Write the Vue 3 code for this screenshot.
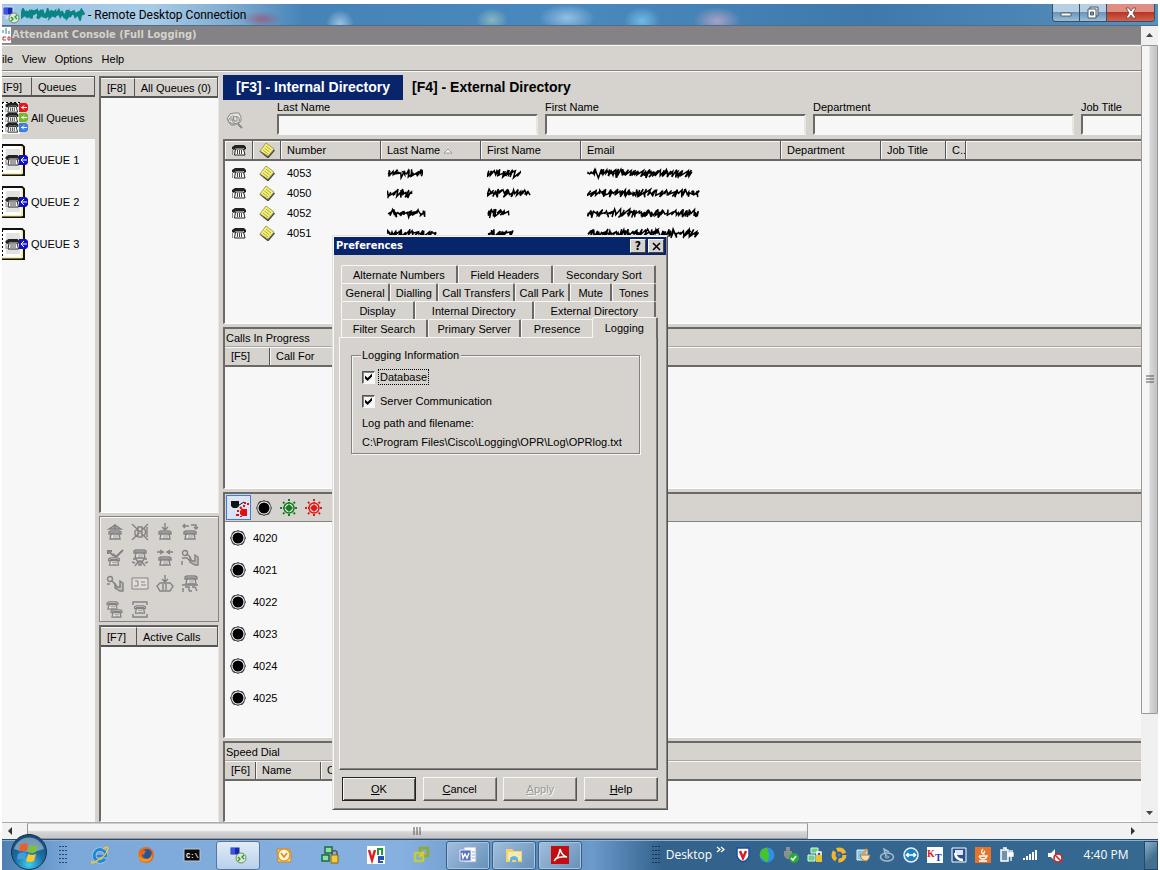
<script setup>
import { ref } from 'vue'

const menus = ['ile', 'View', 'Options', 'Help']
const queues = ['QUEUE 1', 'QUEUE 2', 'QUEUE 3']
const fields = [
  { id: 'last', label: 'Last Name' },
  { id: 'first', label: 'First Name' },
  { id: 'dept', label: 'Department' },
  { id: 'job', label: 'Job Title' },
]
const contacts = [
  { number: '4053', last: 36, first: 34, email: 108 },
  { number: '4050', last: 28, first: 45, email: 114 },
  { number: '4052', last: 40, first: 23, email: 112 },
  { number: '4051', last: 52, first: 27, email: 112 },
]
const extensions = ['4020', '4021', '4022', '4023', '4024', '4025']
const tabRows = [
  [['Alternate Numbers', 117], ['Field Headers', 95], ['Secondary Sort', 103]],
  [['General', 49], ['Dialling', 48], ['Call Transfers', 78], ['Call Park', 55], ['Mute', 42], ['Tones', 43]],
  [['Display', 73], ['Internal Directory', 119], ['External Directory', 123]],
  [['Filter Search', 86], ['Primary Server', 93], ['Presence', 71], ['Logging', 65]],
]
const activeTab = ref('Logging')
const database = ref(true)
const server = ref(true)
const callActions = ['answer', 'mute', 'hold', 'swap', 'accept', 'conference', 'transfer', 'retrieve', 'release', 'card', 'park', 'group', 'multi', 'page']
const pinned = ['ie', 'firefox', 'cmd', 'rdp', 'outlook', 'putty', 'vnc', 'vmware', 'word', 'folder', 'pdf']
const tray = ['shield', 'globe', 'usb', 'lock', 'swirl', 'paint', 'disc', 'viewer', 'kt', 'callbox', 'java', 'plug', 'signal', 'mute-vol']

function scribble(width, seed) {
  let s = seed * 97 + 13
  const rnd = () => {
    s = (s * 1103515245 + 12345) % 2147483648
    return s / 2147483648
  }
  let d = 'M1 7'
  for (let x = 2; x < width - 1; x += 2) {
    d += ` L${(x + rnd() * 5 - 2).toFixed(1)} ${(2 + rnd() * 4).toFixed(1)} L${(x + rnd() * 5 - 3).toFixed(1)} ${(6 + rnd() * 5).toFixed(1)}`
  }
  return d
}
</script>

<template>
  <div class="screen">
    <svg class="defs" aria-hidden="true">
      <symbol id="phone" viewBox="0 0 16 14">
        <path d="M4.500 6h8l1.500 6H3.500z" fill="#fff" stroke="#222" />
        <path d="M1 6V4l3-2h9l2 2v2l-2 1V5H5l-2 2z" fill="#222" />
        <path d="M6.500 7v4M8.500 7v4M10.500 7v4" fill="none" stroke="#444" />
        <path d="M1.500 7v5" fill="none" stroke="#888" />
      </symbol>
      <symbol id="note" viewBox="0 0 16 16">
        <path d="m1 9 8 6.500L15.500 8" fill="none" stroke="#444" stroke-width="1.500" />
        <path d="M7 1 15 7 9 14 1 9z" fill="#f6f27c" stroke="#8d8a3c" stroke-width=".8" />
        <path d="m7 4 5 4M5.500 6l5 4M4 8l5 4" stroke="#aaa640" />
      </symbol>
      <symbol id="gphone" viewBox="0 0 14 10">
        <path d="M1 4V2l2-1h8l2 1v2h-2V3H3v1z" fill="#ddd" stroke="#848284" />
        <path d="m3 4-1 5h10l-1-5z" fill="#e4e2de" stroke="#848284" />
        <path d="M5 6h5M5 8h5" stroke="#848284" stroke-width=".7" />
      </symbol>
      <symbol id="dot" viewBox="0 0 16 16">
        <path d="m8 0 2 1h2l2 2 1 3 1 2-1 2-1 3-2 2h-2l-2 1-2-1H4l-2-2-1-3-1-2 1-2 1-3 2-2h2z" fill="#444" />
        <circle cx="8" cy="8" r="6.5" fill="#fff" />
        <circle cx="8" cy="8" r="5.5" fill="#000" />
      </symbol>
      <symbol id="rdp" viewBox="0 0 18 18">
        <path d="M1 1h10v8H1z" fill="#1628ac" stroke="#dfe6f2" />
        <path d="M2 2h4v6H2z" fill="#3b55e0" />
        <path d="M4 10h4v3H3z" fill="#d9dde2" />
        <circle cx="12" cy="12" r="5" fill="#d9ead2" stroke="#6d8c67" />
        <path d="m9 11 2 2-2 2m6-6-2 2 2 2" fill="none" stroke="#24922a" stroke-width="1.3" />
      </symbol>
    </svg>

    <header class="rdp-bar">
      <svg class="i18" viewBox="0 0 18 18"><use href="#rdp" /></svg>
      <svg class="host" width="64" height="13" viewBox="0 0 64 13" role="img" aria-label="Hidden host name">
        <path :d="scribble(64, 5)" fill="none" stroke="#0b8484" stroke-width="3" />
      </svg>
      <span>- Remote Desktop Connection</span>
      <div class="caption">
        <button aria-label="Minimize"><svg width="14" height="12"><path d="M2 6h10v3H2z" fill="#fff" stroke="#53606c" /></svg></button>
        <button aria-label="Restore"><svg width="14" height="14"><path d="M4 1h8v9H4z" fill="#dfe8f0" stroke="#4b5a68" /><path d="M2 3h8v9H2z" fill="#fff" stroke="#4b5a68" /><path d="M4.500 6h3v3h-3z" fill="#7894ad" stroke="#4b5a68" /></svg></button>
        <button class="close" aria-label="Close"><svg width="14" height="12"><path d="M2 1h3l2 3 2-3h3L9 6l3 5H9L7 8l-2 3H2l3-5z" fill="#fff" stroke="#6b3f3c" stroke-width=".8" /></svg></button>
      </div>
    </header>

    <div class="remote">
      <main class="console">
        <h1><svg width="9" height="16" viewBox="0 0 9 16"><path d="M0 0h9v16H0z" fill="#fff" /><path d="M1 3v3M4 1v6M7 4v3" stroke="#2a8394" /><path d="M4 10H1v3h3M6 10h2v3H6z" fill="none" stroke="#b33" /></svg>Attendant Console (Full Logging)</h1>
        <nav><a v-for="m in menus" :key="m" href="#">{{ m }}</a></nav>
        <div class="columns">
          <section class="queues">
            <div class="head"><span class="f9">[F9]</span><span class="grow">Queues</span></div>
            <ul>
              <li class="on">
                <svg width="27" height="32" viewBox="0 0 27 32">
                  <path d="M0 0h18v32H0z" fill="#fff" /><path d="M.5 0v32M0 .5h18" stroke="#000" stroke-dasharray="2 2" />
                  <path d="M17 1h7l2 2v5l-2 2h-7z" fill="#e01820" /><path d="M17 11h7l2 2v5l-2 2h-7z" fill="#76b82a" /><path d="M17 21h7l2 2v5l-2 2h-7z" fill="#3d7de0" />
                  <path d="M25 5.500h-6m3-2-2 2 2 2M25 15.500h-6m3-2-2 2 2 2M25 25.500h-6m3-2-2 2 2 2" fill="none" stroke="#fff" />
                  <use href="#phone" x="2" y="-1" width="16" height="13" /><use href="#phone" x="2" y="9" width="16" height="13" /><use href="#phone" x="2" y="19" width="16" height="13" />
                </svg>All Queues
              </li>
              <li v-for="q in queues" :key="q">
                <svg width="27" height="32" viewBox="0 0 27 32">
                  <path d="M0 1h20l2 2v28H0z" fill="#fff" /><path d="M0 1h20l2 2v28H0" fill="none" stroke="#111" stroke-width="2" /><path d="M20 2v28H0" fill="none" stroke="#e8dc6a" />
                  <path d="M4 5h14v21H4z" fill="#e2e2e2" /><path d="M.5 2v28" stroke="#000" stroke-dasharray="2 2" />
                  <path d="M17 11h7l2 2v6l-2 2h-7z" fill="#1212c8" /><path d="M25 16h-6m3-3-3 3 3 3" fill="none" stroke="#fff" />
                  <use href="#phone" x="2" y="9" width="17" height="14" />
                </svg>{{ q }}
              </li>
            </ul>
          </section>

          <section class="middle">
            <div class="sunk"><div class="head"><span class="f8">[F8]</span><span class="grow">All Queues (0)</span></div></div>
            <div class="actions">
              <button v-for="a in callActions" :key="a" disabled :aria-label="a">
                <svg width="18" height="18" viewBox="0 0 18 18" fill="none" stroke="#848284" stroke-width="1.4">
                  <template v-if="a === 'answer'"><path d="M9 1v6M3 6l6-4 6 4z" fill="#aaa" /><use href="#gphone" x="2" y="7" width="14" height="10" /></template>
                  <template v-if="a === 'mute'"><path d="m1 1 16 16M17 1 1 17M7 6 4 8v4l3 2V4l4 0v10H8M13 5q3 4 0 8M16 4v10" /></template>
                  <template v-if="a === 'hold'"><path d="M9 0v6M6 4l3 3 3-3" /><use href="#gphone" x="2" y="7" width="14" height="10" /></template>
                  <template v-if="a === 'swap'"><path d="M8 3H2m2-2L2 3l2 2M10 2h5v4m-2-2 2 2 2-2" /><use href="#gphone" x="2" y="7" width="14" height="10" /></template>
                  <template v-if="a === 'accept'"><path d="m2 2 6 5M2 5V2h4M7 5l3 3 7-7" stroke-width="2" /><use href="#gphone" x="1" y="8" width="14" height="9" /></template>
                  <template v-if="a === 'conference'"><use href="#gphone" x="2" y="0" width="14" height="10" /><path d="M2 10h3l2 3-3 4M16 10h-3l-2 3 3 4M1 13l3 1M17 13l-3 1M8 12h2v4H8z" /></template>
                  <template v-if="a === 'transfer'"><path d="M1 3h7M4 1l3 2-3 2M17 3h-6m3-2-3 2 3 2" /><use href="#gphone" x="2" y="7" width="14" height="10" /></template>
                  <template v-if="a === 'retrieve'"><circle cx="4" cy="4" r="2.5" /><path d="m6 5 4 4M1 9h5l3 3M1 12v4" /><path d="m9 9 2 3h3V6l3 2v8h-3l-5-3z" fill="#bbb" /></template>
                  <template v-if="a === 'release'"><circle cx="4" cy="4" r="2.5" /><path d="m6 6 4 4M1 9h3" /><path d="m9 9 2 3h3V6l3 2v8h-3l-5-3z" fill="#bbb" /></template>
                  <template v-if="a === 'card'"><path d="M1 3h16v11H1zM4 6h3v5H3M10 7h4M10 10h5" fill="#e2dfda" stroke-width="1" /></template>
                  <template v-if="a === 'park'"><path d="M9 0v6M6 4l3 3 3-3M4 8h10l3 3-3 5H4l-3-5zM7 9v6M10 9v6" /></template>
                  <template v-if="a === 'group'"><use href="#gphone" x="3" y="0" width="14" height="10" /><path d="M1 10h16M4 12h4v4M11 12h3l2 4M2 13v4M8 16h3" /></template>
                  <template v-if="a === 'multi'"><use href="#gphone" x="0" y="0" width="13" height="9" /><use href="#gphone" x="4" y="8" width="13" height="9" /></template>
                  <template v-if="a === 'page'"><path d="M2 4V1h14v3M2 13v3h14v-3" /><use href="#gphone" x="2" y="4" width="14" height="9" /></template>
                </svg>
              </button>
            </div>
            <div class="sunk"><div class="head"><span class="f8">[F7]</span><span class="grow">Active Calls</span></div></div>
          </section>

          <section class="right">
            <div class="search">
              <div class="dirtabs"><button class="on">[F3] - Internal Directory</button><button>[F4] - External Directory</button></div>
              <div class="fields">
                <svg class="find" width="18" height="18" viewBox="0 0 18 18" fill="none" stroke="#8b8985"><path d="M3 10 1 7l3-5 4-1h5l2 4v4l-3 3H7z" fill="#e6e4e0" /><path d="M5 4v5M7 3l1 6h3V5M4 6l-2 3 3 4h4" /><path d="m12 12 4 4" stroke-width="2" /><circle cx="10" cy="8" r="3.500" /></svg>
                <label v-for="f in fields" :key="f.id" :for="f.id">{{ f.label }}<input :id="f.id" type="text" /></label>
              </div>
            </div>
            <div class="sunk directory">
              <table>
                <colgroup><col class="c28" /><col class="c28" /><col class="c100" /><col class="c100" /><col class="c100" /><col class="c200" /><col class="c100" /><col class="c65" /><col class="c20" /><col /></colgroup>
                <thead><tr>
                  <th class="ic"><svg width="16" height="14"><use href="#phone" /></svg></th><th class="ic"><svg width="16" height="16"><use href="#note" /></svg></th>
                  <th>Number</th><th>Last Name <svg width="10" height="6"><path d="M1 5 5 1l4 4z" fill="#fff" stroke="#999" /></svg></th><th>First Name</th><th>Email</th><th>Department</th><th>Job Title</th><th>C..</th><th></th>
                </tr></thead>
                <tbody><tr v-for="(c, i) in contacts" :key="c.number">
                  <td class="ic"><svg width="16" height="14"><use href="#phone" /></svg></td><td class="ic"><svg width="16" height="16"><use href="#note" /></svg></td>
                  <td>{{ c.number }}</td>
                  <td v-for="(w, k) in [c.last, c.first, c.email]" :key="k"><svg :width="w" height="13" role="img" aria-label="Hidden"><path :d="scribble(w, i * 3 + k + 1)" fill="none" stroke="#000" stroke-width="1.500" /></svg></td>
                  <td></td><td></td><td></td><td></td>
                </tr></tbody>
              </table>
            </div>
            <div class="sunk">
              <h2>Calls In Progress</h2>
              <div class="strip"><span class="w44">[F5]</span><span class="grow">Call For</span></div>
            </div>
            <div class="sunk">
              <div class="blf">
                <button class="on" aria-label="All states"><svg width="20" height="20" viewBox="0 0 20 20"><path d="M2 3h8v5l-2 2H4L2 8z" fill="#111" /><path d="m7 9 8-5" stroke="#111" /><path d="M13 11h5v7h-5l-2-2v-3z" fill="#e01010" /><path d="M14 8h2M11 9l2 2M18 6h2M8 13h2M7 17h3M12 19v-1M15 5h2" stroke="#e01010" stroke-width="2" /></svg></button>
                <button aria-label="Idle"><svg width="16" height="16"><use href="#dot" /></svg></button>
                <button v-for="k in ['green', 'red']" :key="k" :class="k" :aria-label="k">
                  <svg width="18" height="18" viewBox="0 0 18 18" fill="none" stroke="currentColor" stroke-width="2"><path d="M9 0v18M0 9h18M3 3l12 12M15 3 3 15" stroke-dasharray="2 1" /><circle cx="9" cy="9" r="5" fill="#eee" stroke-width="1.500" /><circle cx="9" cy="9" r="2" fill="currentColor" /><path d="M9 5v8M5 9h8" stroke-width="1" /></svg>
                </button>
              </div>
              <ul class="exts"><li v-for="e in extensions" :key="e"><svg width="16" height="16"><use href="#dot" /></svg>{{ e }}</li></ul>
            </div>
            <div class="sunk">
              <h2>Speed Dial</h2>
              <div class="strip"><span class="w30">[F6]</span><span class="w65">Name</span><span class="grow">Contact</span></div>
            </div>
          </section>
        </div>
      </main>

      <div class="vscroll">
        <svg width="17" height="19"><path d="m5 11 3.500-4 3.500 4z" fill="#444" /></svg>
        <div class="thumb"><svg width="8" height="9"><path d="M0 1h8M0 4h8M0 7h8" stroke="#555" /></svg></div>
        <div class="rest"></div>
        <svg width="17" height="17"><path d="m5 6 3.500 4L12 6z" fill="#444" /></svg>
      </div>
    </div>

    <div class="hscroll">
      <svg width="25" height="16"><path d="m10 4-4 4 4 4z" fill="#333" /></svg>
      <div class="thumb"><svg width="9" height="8"><path d="M1 0v8M4 0v8M7 0v8" stroke="#555" /></svg></div>
      <div class="rest"></div>
      <svg width="35" height="16"><path d="m8 4 4 4-4 4z" fill="#333" /></svg>
    </div>

    <footer class="taskbar">
      <button class="start" aria-label="Start">
        <svg width="38" height="38" viewBox="0 0 38 38">
          <defs><radialGradient id="orb" cx=".5" cy=".85" r=".8"><stop offset="0" stop-color="#3fd0f0" /><stop offset=".5" stop-color="#1d6fa5" /><stop offset="1" stop-color="#174a78" /></radialGradient></defs>
          <circle cx="19" cy="19" r="17.500" fill="url(#orb)" stroke="#13334f" /><path d="M4 16a15.500 15.500 0 0 1 30 0q-15 6-30 0" fill="#fff" opacity=".4" />
          <path d="M10 12q4-3 8-1l-1 7q-5-1-8 1z" fill="#e8602a" /><path d="M20 12q4 2 8 0l-2 7q-4 2-8 0z" fill="#83bf35" /><path d="M8 21q4-3 8-1l-1 7q-4-2-8 0z" fill="#3f9de0" /><path d="M18 21q4 2 8 0l-2 7q-4 2-8 0z" fill="#fbc92d" />
        </svg>
      </button>
      <svg class="grip" width="9" height="19"><path d="M1 0v19M4 0v19M7 0v19" stroke="#24486e" stroke-dasharray="1 3" stroke-width="2" /></svg>
      <div class="pins">
        <button v-for="p in pinned" :key="p" :class="p" :aria-label="p">
          <svg width="18" height="18" viewBox="0 0 18 18">
            <template v-if="p === 'ie'"><path d="M14 13a6 6 0 1 1 .8-5.500V10H6" fill="none" stroke="#fff" stroke-width="4" opacity=".5" /><path d="M14 13a6 6 0 1 1 .8-5.500V10H6" fill="none" stroke="#1d86d8" stroke-width="3" /><path d="M1 15Q-1 18 4 16 16 10 17 2 16 0 12 3" fill="none" stroke="#f4c52c" stroke-width="1.500" /></template>
            <template v-if="p === 'firefox'"><circle cx="9" cy="9" r="8" fill="#e66a1b" /><circle cx="10" cy="8" r="5" fill="#24569a" /><path d="M1 5q1 9 8 8 5 0 6-6 1 8-6 9-7 0-8-8z" fill="#f29a1f" /><path d="m4 3 3 2 2-1-2 5-4-2z" fill="#e66a1b" /></template>
            <template v-if="p === 'cmd'"><path d="M1 3h16v12H1z" fill="#0b0b0b" stroke="#c0c8d0" /><text x="3" y="12" class="t7">C:\</text></template>
            <use v-if="p === 'rdp'" href="#rdp" />
            <template v-if="p === 'outlook'"><path d="M2 3h12l2 4v9H3z" fill="#f8d17a" stroke="#c08a28" /><circle cx="9" cy="9" r="6" fill="#fff4d8" stroke="#e59b2a" stroke-width="1.500" /><path d="m6 7 3 4 3-4" fill="none" stroke="#d58b1a" stroke-width="1.500" /></template>
            <template v-if="p === 'putty'"><path d="M4 1h7v6H4zM1 9h7v6H1z" fill="#8ee0a0" stroke="#1d6a4a" stroke-width="1.500" /><path d="M10 9h7v8h-7z" fill="#f0c838" stroke="#8a6a10" /><path d="M11 9V6q2.500-3 5 0v3" fill="none" stroke="#555" stroke-width="1.500" /></template>
            <template v-if="p === 'vnc'"><path d="M0 0h18v18H0z" fill="#fff" /><path d="m2 4 3 10L8 4" fill="none" stroke="#e02020" stroke-width="2.500" /><path d="M11 9V3h4v6" fill="none" stroke="#1b9a3a" stroke-width="2" /><path d="M16 16h-4v-5h4v2h-4" fill="none" stroke="#234fc0" stroke-width="2" /></template>
            <template v-if="p === 'vmware'"><path d="M7 2h8v8H7z" fill="none" stroke="#8cae1c" stroke-width="2.500" stroke-linejoin="round" /><path d="M2 7h8v8H2z" fill="none" stroke="#b5cf4a" stroke-width="2.500" stroke-linejoin="round" /><path d="m6 11 5-5" stroke="#f0c02c" stroke-width="2.500" /></template>
            <template v-if="p === 'word'"><path d="M5 1h12v15H5z" fill="#fff" stroke="#9aaace" /><path d="M1 4h11v11H1z" fill="#5b74c2" stroke="#e5ebf8" /><path d="m3 7 1 5 2-4 2 4 2-5" fill="none" stroke="#fff" stroke-width="1.400" /><path d="M13 6h3M13 9h3M13 12h3" stroke="#9aaace" /></template>
            <template v-if="p === 'folder'"><path d="M1 3h6l2 2h8v11H1z" fill="#f3d270" /><path d="M3 6h13v8H3z" fill="#fbeab0" /><path d="M5 17v-5q4-4 8 0v5h-2v-3H7v3z" fill="#5fb6e4" /></template>
            <template v-if="p === 'pdf'"><path d="M0 0h18v18H0z" fill="#c40d10" /><path d="M3 15q5-4 6-12 2 7 7 8-6-1-12 2" fill="none" stroke="#fff" stroke-width="1.600" /></template>
          </svg>
        </button>
      </div>
      <div class="tail">
        <svg class="grip" width="9" height="19"><path d="M1 0v19M4 0v19M7 0v19" stroke="#17344f" stroke-dasharray="1 3" stroke-width="2" /></svg>
        <a class="desktop" href="#">Desktop</a>
        <svg class="chev" width="9" height="8"><path d="m1 1 3 2.500L1 6m4-5 3 2.500L5 6" fill="none" stroke="#fff" stroke-width="1.300" /></svg>
        <div class="tray">
          <svg v-for="t in tray" :key="t" width="16" height="16" viewBox="0 0 16 16">
            <template v-if="t === 'shield'"><path d="M2 1h12v8q-1 4-6 6-5-2-6-6z" fill="#fff" stroke="#1f4e9a" stroke-width="1.500" /><path d="m5 4 3 7 3-7" fill="none" stroke="#d81f26" stroke-width="2.500" /></template>
            <template v-if="t === 'globe'"><circle cx="8" cy="8" r="7.500" fill="#2f8fe0" /><path d="M8 .5q-8 1-7 9l7 6q4-7 0-15" fill="#46c32d" /></template>
            <template v-if="t === 'usb'"><path d="M3 0h4v4h2v5L6 12H4L1 9V4h2z" fill="#8a8f92" /><circle cx="11" cy="11" r="5" fill="#2aa836" /><path d="m8 11 2 2 3-4" fill="none" stroke="#fff" stroke-width="1.600" /></template>
            <template v-if="t === 'lock'"><path d="M4 1h7v5H4zM1 8h7v6H1z" fill="#67d184" stroke="#e4f5e8" /><path d="M9 8h6v7H9z" fill="#e7c236" /><path d="M10 8V5h4v3" fill="none" stroke="#fff" stroke-width="1.500" /></template>
            <template v-if="t === 'swirl'"><circle cx="8" cy="8" r="5.500" fill="none" stroke="#f2b632" stroke-width="4" stroke-dasharray="9 2.500" /><circle cx="8" cy="8" r="1.500" fill="#5b7d94" /></template>
            <template v-if="t === 'paint'"><path d="M2 3h10v10H2z" fill="#7cc8ee" stroke="#e8f2f8" /><path d="M5 8h10q-1 6-5 6-4-1-5-6" fill="#f6dfb4" stroke="#b07a3a" /><path d="m7 8 5-6" stroke="#f0963c" stroke-width="2" /></template>
            <template v-if="t === 'disc'"><ellipse cx="8" cy="10" rx="6.500" ry="4" fill="none" stroke="#a8bccb" stroke-width="1.500" /><ellipse cx="8" cy="10" rx="2" ry="1" fill="none" stroke="#a8bccb" /><path d="M7 9 5 2l5 3" fill="none" stroke="#a8bccb" stroke-width="1.500" /></template>
            <template v-if="t === 'viewer'"><circle cx="8" cy="8" r="7" fill="#1e7fc2" stroke="#e6f3fb" stroke-width="1.500" /><path d="M3 8h10M5.500 6l-2 2 2 2m5-4 2 2-2 2" fill="none" stroke="#fff" stroke-width="1.600" /></template>
            <template v-if="t === 'kt'"><path d="M0 0h16v16H0z" fill="#fff" /><text x="0" y="10" class="k">K</text><text x="8" y="14" class="k blue">T</text></template>
            <template v-if="t === 'callbox'"><path d="M1 1h14v14H1z" fill="#2a4f93" stroke="#fff" /><path d="M4 3h8v5H4z" fill="#dfe8f6" /><path d="M4 6q1 7 8 7" fill="none" stroke="#fff" stroke-width="2.500" /></template>
            <template v-if="t === 'java'"><path d="M0 0h16v16H0z" fill="#e8742c" /><path d="M8 2Q5 5 8 7M10 4Q8 6 9 8M4 9h8q-1 3-4 3t-4-3M4 14h8" fill="none" stroke="#fff" stroke-width="1.300" /></template>
            <template v-if="t === 'plug'"><path d="M2 3h7v11H2zM4 1h3v2" fill="#6f93ae" stroke="#fff" stroke-width="1.500" /><path d="M9 6h5v3h-5zM11 3v3M13 3v3M12 9v5" fill="#fff" stroke="#fff" stroke-width="1.300" /></template>
            <template v-if="t === 'signal'"><path d="M1 13v-2M4 13V9M7 13V7M10 13V5M13 13V3" stroke="#fff" stroke-width="2" /></template>
            <template v-if="t === 'mute-vol'"><path d="M1 6h3l4-4v12l-4-4H1z" fill="#fff" /><circle cx="11" cy="11" r="4" fill="#fff" stroke="#d82222" stroke-width="1.600" /><path d="m8 8 6 6" stroke="#d82222" stroke-width="1.600" /></template>
          </svg>
        </div>
        <time>4:40 PM</time>
        <button class="peek" aria-label="Show desktop"></button>
      </div>
    </footer>

    <div class="dialog" role="dialog" aria-labelledby="dlg-title">
      <div class="dlg-title">
        <span id="dlg-title">Preferences</span>
        <button aria-label="Help">?</button>
        <button aria-label="Close"><svg width="9" height="9"><path d="m1 1 7 7M8 1 1 8" stroke="#000" stroke-width="1.600" /></svg></button>
      </div>
      <div class="dlg-body">
        <div class="tabs" role="tablist">
          <div v-for="(row, r) in tabRows" :key="r" class="tabrow">
            <button v-for="t in row" :key="t[0]" role="tab" :aria-selected="t[0] === activeTab" :class="{ active: t[0] === activeTab }" :style="{ flexGrow: t[1] }" @click="activeTab = t[0]">{{ t[0] }}</button>
          </div>
        </div>
        <div class="panel" role="tabpanel">
          <fieldset>
            <legend>Logging Information</legend>
            <div class="check"><input id="db" v-model="database" type="checkbox" /><label for="db" class="focus">Database</label></div>
            <div class="check"><input id="sv" v-model="server" type="checkbox" /><label for="sv">Server Communication</label></div>
            <p>Log path and filename:</p>
            <p>C:\Program Files\Cisco\Logging\OPR\Log\OPRlog.txt</p>
          </fieldset>
        </div>
        <div class="buttons">
          <button class="ok"><u>O</u>K</button><button><u>C</u>ancel</button><button disabled><u>A</u>pply</button><button><u>H</u>elp</button>
        </div>
      </div>
    </div>
  </div>
</template>

<style>
body { margin: 0; background: #fff; }
</style>

<style scoped>
* { box-sizing: border-box; }
.screen {
  position: relative;
  display: flex;
  flex-direction: column;
  height: 100vh;
  padding: 4px 2px 0;
  overflow: hidden;
  font: 11px/14px "Liberation Sans", Arial, sans-serif;
  color: #000;
}
.defs { position: absolute; width: 0; height: 0; }
button { margin: 0; padding: 0; border: 0; background: none; font: inherit; color: inherit; display: flex; align-items: center; justify-content: center; }
a { color: inherit; text-decoration: none; }
ul { list-style: none; margin: 0; padding: 0; }
svg { flex: none; }
h1, h2, p { margin: 0; }
.grow { flex: 1; }
.i18 { width: 18px; height: 18px; }

.rdp-bar {
  flex: none;
  height: 22px;
  display: flex;
  align-items: center;
  gap: 1px;
  border-bottom: 1px solid #4d6f8e;
  background:
    radial-gradient(ellipse 20px 8px at 260px 15px, #9a5a7acc, transparent),
    radial-gradient(ellipse 14px 14px at 338px 20px, #b4d2eacc, transparent),
    radial-gradient(ellipse 16px 12px at 490px 16px, #a8cfc4aa, transparent),
    radial-gradient(ellipse 28px 14px at 565px 14px, #a6cdeecc, transparent),
    radial-gradient(ellipse 18px 14px at 640px 17px, #7cc8eecc, transparent),
    radial-gradient(ellipse 24px 14px at 715px 17px, #c0aac8cc, transparent),
    linear-gradient(90deg, #9fc6e6 0, #a8cbe6 150px, #7fabd0 230px, #4684b8 300px, #4a89bd 50%, #3f79ac 75%, #5790bd 100%);
  font: 12px/16px Roboto, "Noto Sans", sans-serif;
}
.rdp-bar span { padding-left: 2px; }
.caption { display: flex; align-self: flex-start; margin-left: auto; margin-right: 3px; border: 1px solid #33516c; border-top: 0; border-radius: 0 0 4px 4px; overflow: hidden; }
.caption button { width: 27px; height: 17px; background: linear-gradient(#b7cfe3 45%, #6a94b8 50%, #9dbdd6); border-right: 1px solid #33516c; }
.caption .close { width: 47px; border: 0; background: linear-gradient(#dd8f83 45%, #bb3524 50%, #d4614c); }

.remote { flex: 1; min-height: 0; display: flex; background: #d6d3ce; }
.console { flex: 1; min-width: 0; display: flex; flex-direction: column; overflow: hidden; }
h1 { flex: none; height: 19px; display: flex; align-items: center; gap: 1px; background: #848284; border-bottom: 1px solid #9a9894; color: #d6d3ce; font: bold 11px/16px "DejaVu Sans Condensed", "Noto Sans", sans-serif; }
nav { flex: none; display: flex; gap: 9px; height: 26px; align-items: center; padding-top: 1px; border-top: 1px solid #f7f7f7; border-bottom: 1px solid #848284; }
.columns { flex: 1; min-height: 0; display: grid; grid-template-columns: 93px 120px minmax(0, 1fr); column-gap: 4px; padding-top: 4px; border-top: 1px solid #f7f7f7; }

.queues { display: flex; flex-direction: column; background: #f7f7f7; }
.head { display: flex; height: 21px; border-top: 1px solid #555; border-right: 1px solid #555; border-bottom: 2px solid #555; background: #d6d3ce; }
.head span { padding: 2px 6px; line-height: 15px; border-top: 1px solid #f7f7f7; white-space: nowrap; }
.head span + span { border-left: 1px solid #555; }
.head .f9 { width: 29px; padding-left: 1px; }
.head .f8 { width: 35px; }
.queues .grow { padding-left: 6px; }
.queues li { display: flex; align-items: center; gap: 2px; height: 42px; }
.queues li.on { background: #d6d3ce; }

.middle { display: grid; grid-template-rows: minmax(0, 438fr) 106px minmax(0, 198fr); row-gap: 3px; }
.sunk { min-width: 0; overflow: hidden; background: #f7f7f7; border-top: 2px solid #6b6965; border-left: 2px solid #6b6965; border-bottom: 1px solid #fff; }
.middle .sunk { border-right: 1px solid #e8e6e2; border-top: 1px solid #6b6965; }
.actions { display: grid; grid-template-columns: repeat(4, 25px); grid-auto-rows: 26px; align-content: start; padding: 2px; border: 1px solid #848284; box-shadow: inset 1px 1px #f7f7f7; }

.right { display: grid; grid-template-rows: 64px minmax(0, 185fr) minmax(0, 162fr) minmax(0, 246fr) minmax(0, 81fr); row-gap: 3px; margin-top: -4px; min-width: 0; overflow: hidden; }
.search { min-width: 0; padding-top: 3px; }
.dirtabs { display: flex; font: bold 14px/25px "Liberation Sans", Arial, sans-serif; }
.dirtabs button { height: 25px; padding: 0 9px; white-space: nowrap; }
.dirtabs .on { width: 180px; background: #08246b; color: #fff; }
.fields { display: flex; gap: 7px; padding-left: 3px; }
.find { margin: 12px 26px 0 0; }
.fields label { flex: none; width: 261px; }
.fields input { display: block; width: 100%; height: 21px; border: 2px solid; border-color: #6b6965 #e8e6e2 #f7f7f7 #6b6965; background: #f7f7f7; padding: 0 3px; font: inherit; outline: 0; }

table { width: 100%; table-layout: fixed; border-collapse: separate; border-spacing: 0; }
.c28 { width: 28px; } .c100 { width: 100px; } .c200 { width: 200px; } .c65 { width: 65px; } .c20 { width: 20px; }
th { height: 20px; padding: 0 0 0 6px; text-align: left; font-weight: normal; white-space: nowrap; overflow: hidden; background: #d6d3ce; border-right: 1px solid #555; border-bottom: 2px solid #6b6965; box-shadow: inset 1px 1px #f7f7f7; }
th:last-child { border-right: 0; }
td { height: 20px; padding: 0 0 0 6px; white-space: nowrap; }
th svg, td svg { vertical-align: middle; }
.ic { padding: 0; text-align: center; line-height: 0; }
.directory tbody::before { content: ""; display: block; height: 2px; }
h2 { height: 18px; padding: 2px 1px; background: #d6d3ce; border-bottom: 1px solid #aaa7a2; font: 11px/15px "Liberation Sans", Arial, sans-serif; }
.strip { display: flex; height: 20px; background: #d6d3ce; border-top: 1px solid #f7f7f7; border-bottom: 2px solid #6b6965; }
.strip span { padding: 1px 6px; line-height: 15px; }
.strip span + span { border-left: 1px solid #555; box-shadow: inset 1px 0 #f7f7f7; }
.w44 { width: 44px; } .w30 { width: 30px; } .w65 { width: 65px; }
.blf { display: flex; align-items: center; height: 28px; padding-left: 1px; background: #d6d3ce; border-bottom: 1px solid #848284; }
.blf button { width: 25px; height: 25px; }
.blf .on { border: 1px solid #3a7fe0; background: #dbe4f6; }
.green { color: #157a22; } .red { color: #e01818; }
.exts li { display: flex; align-items: center; gap: 7px; height: 32px; padding-left: 5px; }

.vscroll { flex: none; width: 17px; display: flex; flex-direction: column; background: #f0f0f0; }
.vscroll .thumb { flex: 670; display: flex; align-items: center; justify-content: center; border: 1px solid #989898; border-radius: 1px; background: linear-gradient(90deg, #f5f5f5 45%, #d6d6d8 55%, #c4c4c6); }
.vscroll .rest { flex: 91; }
.hscroll { flex: none; height: 17px; display: flex; align-items: stretch; background: #f2f2f2; border-top: 1px solid #aaa; }
.hscroll .thumb { flex: 782; display: flex; align-items: center; justify-content: center; border: 1px solid #989898; border-top-color: #ccc; background: linear-gradient(#f5f5f5 45%, #d6d6d8 55%, #c4c4c6); }
.hscroll .rest { flex: 316; }

.taskbar {
  position: relative;
  flex: none;
  height: 31px;
  display: flex;
  align-items: center;
  border-top: 1px solid #274c70;
  box-shadow: inset 0 1px #8cb0d2;
  background: linear-gradient(90deg, #4d7fb3 0, #7ca9da 70px, #86b0df 400px, #5b8bbd 530px, #6c9bcb 590px, #33628d 660px, #356990 100%);
  color: #fff;
  font: 12px/16px "Open Sans", "Noto Sans", sans-serif;
}
.start { position: relative; width: 56px; height: 30px; }
.start svg { position: absolute; left: 8px; top: -7px; }
.grip { margin-left: 1px; }
.pins { display: flex; gap: 2px; margin-left: 10px; }
.pins button { width: 44px; height: 29px; }
.pins .rdp { border: 1px solid #56779b; border-radius: 3px; background: linear-gradient(#e2ecf8, #b7cfec); }
.pins .word, .pins .folder, .pins .pdf { border: 1px solid #385f88; box-shadow: inset 0 0 0 1px #a8c4de; border-radius: 3px; background: linear-gradient(135deg, #a3bfdc, #6590b9); }
.t7 { font: bold 7px "Liberation Mono", monospace; fill: #fff; }
.k { font: bold 10px "Liberation Serif", serif; fill: #d81f26; }
.k.blue { fill: #1c34b8; }
.tail { flex: 1; display: flex; align-items: center; justify-content: flex-end; height: 100%; }
.desktop { margin-left: 5px; }
.chev { margin: 0 10px 10px 4px; }
.tray { display: flex; gap: 8px; }
time { width: 81px; padding-left: 5px; text-align: center; white-space: nowrap; }
.peek { width: 14px; height: 29px; border: 1px solid #24486a; background: linear-gradient(135deg, #8fb0c8, #44708f 60%); }

.dialog { position: absolute; left: 332px; top: 235px; width: 336px; background: #d6d3ce; border: 1px solid; border-color: #e4e2de #555 #555 #e4e2de; box-shadow: inset 1px 1px #f7f7f7, inset -1px -1px #848284; padding: 1px; }
.dlg-title { display: flex; align-items: center; gap: 2px; height: 18px; padding: 0 2px; background: #08246b; color: #fff; font: bold 11px/16px "DejaVu Sans Condensed", "Noto Sans", sans-serif; }
.dlg-title span { flex: 1; }
.dlg-title button { width: 16px; height: 14px; background: #d6d3ce; color: #000; border: 1px solid; border-color: #f7f7f7 #444 #444 #f7f7f7; font-size: 12px; }
.dlg-body { padding: 10px 8px 7px 5px; }
.tabs { padding: 0 2px; }
.tabrow { display: flex; height: 18px; }
.tabrow button { position: relative; flex: 0 1 0; min-width: 0; white-space: nowrap; background: #d6d3ce; border-top: 1px solid #f7f7f7; border-left: 1px solid #f7f7f7; border-right: 2px solid #6b6965; border-radius: 2px 2px 0 0; }
.tabrow .active { z-index: 1; margin: -2px -2px -1px -2px; }
.panel { height: 433px; padding: 10px 17px 0 11px; border: 1px solid; border-color: #f7f7f7 #555 #555 #f7f7f7; box-shadow: inset -1px -1px #848284; }
fieldset { margin: 0; padding: 0 0 2px 10px; min-width: 0; border: 1px solid #848284; box-shadow: inset 1px 1px #f7f7f7, 1px 1px #f7f7f7; }
legend { padding: 0 2px 0 1px; margin-left: -1px; background: #d6d3ce; }
.check { display: flex; align-items: center; gap: 3px; height: 24px; }
.check:first-of-type { margin-top: 3px; }
.check label { padding: 0 1px; border: 1px solid transparent; }
.check label.focus { border: 1px dotted #000; }
.check input { appearance: none; width: 13px; height: 13px; margin: 0; border: 1px solid; border-color: #555 #f7f7f7 #f7f7f7 #555; background: #f7f7f7; box-shadow: inset 1px 1px #848284; }
.check input:checked::before { content: ""; display: block; width: 11px; height: 11px; background: #000; clip-path: polygon(18% 36%, 42% 58%, 82% 18%, 82% 46%, 42% 86%, 18% 64%); }
fieldset p { height: 19px; padding-top: 3px; white-space: nowrap; }
.buttons { display: flex; justify-content: space-between; padding: 7px 0 0 3px; }
.buttons button { width: 74px; height: 24px; border: 1px solid; border-color: #f7f7f7 #555 #555 #f7f7f7; box-shadow: inset -1px -1px #848284; }
.buttons .ok { border-color: #222; box-shadow: inset 1px 1px #f7f7f7, inset -1px -1px #555; }
.buttons button:disabled { color: #9b9893; text-shadow: 1px 1px #f7f7f7; }
</style>
